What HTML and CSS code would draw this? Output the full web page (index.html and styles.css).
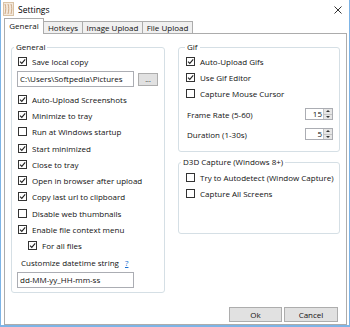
FILE: index.html
```html
<!DOCTYPE html>
<html lang="en">
<head>
  <meta charset="UTF-8" />
  <title>Settings</title>
  <link rel="stylesheet" href="styles.css">
</head>
<body>
  <div class="window">
    <div class="titlebar">
      <svg class="app-icon" viewBox="0 0 11 14" width="11" height="14">
        <rect x="0.5" y="0.5" width="10" height="13" fill="#f3e9dc" stroke="#d9c3a6"/>
        <path d="M2 12 C3 8 3 5 2 2 M5 12 C6 8 6 5 5 2 M8 12 C9 8 9 5 8 2" stroke="#c9a27c" fill="none" stroke-width="0.9"/>
      </svg>
      <span class="title">Settings</span>
      <svg class="close" viewBox="0 0 8 8" width="8" height="8">
        <path d="M0.5 0.5 L7.5 7.5 M7.5 0.5 L0.5 7.5" stroke="#333" stroke-width="1" fill="none"/>
      </svg>
    </div>

    <div class="tabs">
      <div class="tab active" style="width:40px">General</div>
      <div class="tab" style="width:40px">Hotkeys</div>
      <div class="tab" style="width:61px">Image Upload</div>
      <div class="tab" style="width:51px">File Upload</div>
    </div>

    <div class="panel">
      <div class="columns">
        <fieldset class="group group-general">
          <legend>General</legend>
          <div class="check-row"><span class="box on"><svg viewBox="0 0 7 7"><path d="M1 3.6 L2.8 5.4 L6.2 1.4"/></svg></span>Save local copy</div>
          <div class="path-row">
            <div class="field">C:\Users\Softpedia\Pictures</div>
            <button class="browse">...</button>
          </div>
          <div class="check-row"><span class="box on"><svg viewBox="0 0 7 7"><path d="M1 3.6 L2.8 5.4 L6.2 1.4"/></svg></span>Auto-Upload Screenshots</div>
          <div class="check-row"><span class="box on"><svg viewBox="0 0 7 7"><path d="M1 3.6 L2.8 5.4 L6.2 1.4"/></svg></span>Minimize to tray</div>
          <div class="check-row"><span class="box"></span>Run at Windows startup</div>
          <div class="check-row"><span class="box on"><svg viewBox="0 0 7 7"><path d="M1 3.6 L2.8 5.4 L6.2 1.4"/></svg></span>Start minimized</div>
          <div class="check-row"><span class="box on"><svg viewBox="0 0 7 7"><path d="M1 3.6 L2.8 5.4 L6.2 1.4"/></svg></span>Close to tray</div>
          <div class="check-row"><span class="box on"><svg viewBox="0 0 7 7"><path d="M1 3.6 L2.8 5.4 L6.2 1.4"/></svg></span>Open in browser after upload</div>
          <div class="check-row"><span class="box on"><svg viewBox="0 0 7 7"><path d="M1 3.6 L2.8 5.4 L6.2 1.4"/></svg></span>Copy last url to clipboard</div>
          <div class="check-row"><span class="box"></span>Disable web thumbnails</div>
          <div class="check-row"><span class="box on"><svg viewBox="0 0 7 7"><path d="M1 3.6 L2.8 5.4 L6.2 1.4"/></svg></span>Enable file context menu</div>
          <div class="check-row indent"><span class="box on"><svg viewBox="0 0 7 7"><path d="M1 3.6 L2.8 5.4 L6.2 1.4"/></svg></span>For all files</div>
          <div class="label-row">Customize datetime string <a class="help" href="#">?</a></div>
          <div class="field date-field">dd-MM-yy_HH-mm-ss</div>
        </fieldset>

        <div class="right-col">
          <fieldset class="group group-gif">
            <legend>Gif</legend>
            <div class="check-row"><span class="box on"><svg viewBox="0 0 7 7"><path d="M1 3.6 L2.8 5.4 L6.2 1.4"/></svg></span>Auto-Upload Gifs</div>
            <div class="check-row"><span class="box on"><svg viewBox="0 0 7 7"><path d="M1 3.6 L2.8 5.4 L6.2 1.4"/></svg></span>Use Gif Editor</div>
            <div class="check-row"><span class="box"></span>Capture Mouse Cursor</div>
            <div class="spin-row first">
              <span>Frame Rate (5-60)</span>
              <div class="spin"><span class="spin-value">15</span><span class="spin-btns"><i class="up"></i><i class="down"></i></span></div>
            </div>
            <div class="spin-row">
              <span>Duration (1-30s)</span>
              <div class="spin"><span class="spin-value">5</span><span class="spin-btns"><i class="up"></i><i class="down"></i></span></div>
            </div>
          </fieldset>

          <fieldset class="group group-d3d">
            <legend>D3D Capture (Windows 8+)</legend>
            <div class="check-row tight"><span class="box"></span>Try to Autodetect (Window Capture)</div>
            <div class="check-row tight"><span class="box"></span>Capture All Screens</div>
          </fieldset>
        </div>
      </div>

      <div class="actions">
        <button class="btn">Ok</button>
        <button class="btn">Cancel</button>
      </div>
    </div>
  </div>
</body>
</html>
```

FILE: styles.css
```css
:root {
  --accent: #7db4e6;
  --tab-border: #acacac;
  --group-border: #d5dfe5;
  --field-border: #abadb3;
  --text: #111;
}

* {
  box-sizing: border-box;
}

body {
  margin: 0;
  background: #fff;
  font-family: 'Open Sans', 'Noto Sans', sans-serif;
  font-size: 8px;
  color: var(--text);
}

.window {
  width: 350px;
  height: 327px;
  border-left: 1px solid var(--accent);
  border-right: 1px solid var(--accent);
  border-bottom: 2px solid var(--accent);
  padding: 0 2px 0 3px;
  display: flex;
  flex-direction: column;
  background: #fff;
}

.titlebar {
  height: 18px;
  display: flex;
  align-items: center;
  margin-left: -1px;
}

.app-icon {
  display: block;
  margin-top: 0;
}

.title {
  font-size: 8.5px;
  margin-left: 4px;
  color: #000;
}

.close {
  margin-left: auto;
  margin-right: 5px;
  margin-top: 1px;
  display: block;
}

.tabs {
  display: flex;
  align-items: flex-end;
  height: 15px;
  position: relative;
  z-index: 1;
}

.tab {
  height: 12px;
  line-height: 11px;
  text-align: center;
  background: #f0f0f0;
  border: 1px solid var(--tab-border);
  border-bottom: none;
  margin-left: -1px;
  white-space: nowrap;
}

.tab:first-child {
  margin-left: 0;
}

.tab.active {
  height: 16px;
  line-height: 13px;
  background: #fff;
  margin-bottom: -1px;
}

.panel {
  flex: 1;
  border: 1px solid var(--tab-border);
  display: flex;
  flex-direction: column;
  padding: 8px 0 2px 6px;
}

.columns {
  display: flex;
  gap: 13px;
  align-items: flex-start;
}

.group {
  margin: 0;
  border: 1px solid var(--group-border);
  border-radius: 3px;
  min-width: 0;
}

.group legend {
  height: 10px;
  line-height: 10px;
  padding: 0 2px;
}

.group-general {
  width: 154px;
  padding: 1px 6px 4px 6px;
}

.group-general legend {
  margin-left: -4px;
}

.right-col {
  width: 162px;
  display: flex;
  flex-direction: column;
}

.group-gif {
  padding: 1px 6px 7px 7px;
}

.group-gif legend {
  margin-left: -1px;
}

.group-d3d {
  margin-top: 5px;
  padding: 3px 6px 32px 7px;
}

.group-d3d legend {
  margin-left: -5px;
}

.check-row {
  display: flex;
  align-items: center;
  height: 16.25px;
  white-space: nowrap;
}

.group-gif .check-row {
  height: 16px;
}

.check-row.tight {
  height: 15.5px;
}

.check-row.indent {
  padding-left: 10px;
}

.box {
  width: 9px;
  height: 9px;
  flex: none;
  border: 1px solid #333;
  background: #fff;
  margin-right: 5px;
}

.box svg {
  display: block;
  width: 7px;
  height: 7px;
}

.box svg path {
  fill: none;
  stroke: #222;
  stroke-width: 1.1;
}

.path-row {
  display: flex;
  align-items: center;
  gap: 4px;
  margin: 2px 0 4px -1px;
}

.field {
  width: 117px;
  height: 16px;
  line-height: 14px;
  border: 1px solid var(--field-border);
  padding-left: 2px;
  background: #fff;
  white-space: nowrap;
  overflow: hidden;
}

.browse {
  width: 20px;
  height: 13px;
  padding: 0;
  font: inherit;
  font-size: 7px;
  line-height: 9px;
  background: #e1e1e1;
  border: 1px solid #adadad;
  color: #222;
}

.label-row {
  height: 16px;
  line-height: 16px;
  margin-top: 1.5px;
  padding-left: 3px;
  white-space: nowrap;
}

.help {
  color: #1a6fd0;
  margin-left: 4px;
}

.date-field {
  margin: 1px 0 0 -1px;
}

.spin-row {
  height: 20px;
  display: flex;
  align-items: center;
  justify-content: space-between;
  padding-left: 1px;
}

.spin-row.first {
  margin-top: 3px;
}

.spin {
  width: 28px;
  height: 12px;
  display: flex;
  border: 1px solid var(--field-border);
  background: #fff;
}

.spin-value {
  flex: 1;
  text-align: right;
  line-height: 10px;
  padding-right: 1px;
}

.spin-btns {
  width: 9px;
  display: flex;
  flex-direction: column;
  border-left: 1px solid #c4c4c4;
}

.spin-btns i {
  flex: 1;
  background: #e6e6e6;
  position: relative;
}

.spin-btns i + i {
  border-top: 1px solid #c4c4c4;
}

.spin-btns i::after {
  content: "";
  position: absolute;
  left: 2px;
  border-left: 2px solid transparent;
  border-right: 2px solid transparent;
}

.spin-btns .up::after {
  top: 1px;
  border-bottom: 2px solid #333;
}

.spin-btns .down::after {
  top: 1px;
  border-top: 2px solid #333;
}

.actions {
  margin-top: auto;
  display: flex;
  justify-content: flex-end;
  gap: 2px;
  padding-right: 8px;
}

.btn {
  height: 15px;
  width: 53px;
  padding: 0;
  font: inherit;
  line-height: 13px;
  background: #e1e1e1;
  border: 1px solid #adadad;
  color: #111;
}

.btn + .btn {
  width: 54px;
}
```
